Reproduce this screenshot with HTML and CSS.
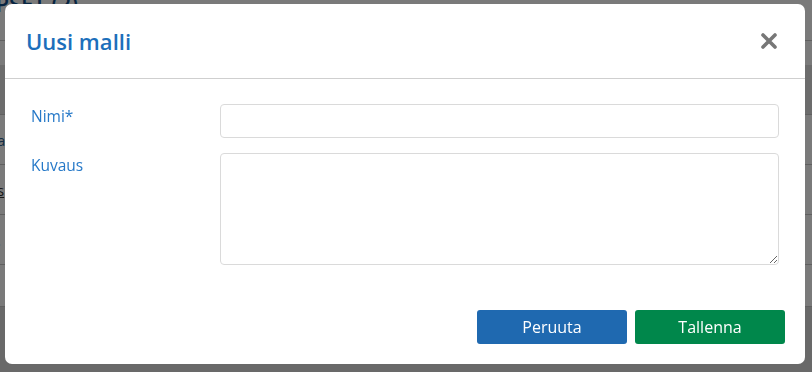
FILE: index.html
```html
<!DOCTYPE html>
<html lang="fi">
<head>
<meta charset="utf-8">
<title>Uusi malli</title>
<link rel="stylesheet" href="styles.css">
</head>
<body>
<div class="page">
  <div class="page-head"><span class="page-title">MALLIPSET (2)</span></div>
  <div class="page-row plain"></div>
  <div class="page-row band"></div>
  <div class="page-row"><span class="cell-text link">a</span></div>
  <div class="page-row"><span class="cell-text under">s</span></div>
  <div class="page-row short"><span class="cell-text">.</span></div>
  <div class="page-row short2"></div>
  <div class="page-foot"></div>
</div>
<div class="overlay"></div>
<div class="modal" role="dialog">
  <div class="modal-header">
    <h2 class="modal-title">Uusi malli</h2>
    <button class="close-btn" aria-label="Sulje">
      <svg width="18" height="18" viewBox="0 0 18 18"><path d="M3 3 L15 15 M15 3 L3 15" stroke="#777" stroke-width="3.6" stroke-linecap="round" fill="none"/></svg>
    </button>
  </div>
  <div class="modal-body">
    <div class="form-row">
      <label class="form-label">Nimi*</label>
      <input class="form-input" type="text">
    </div>
    <div class="form-row">
      <label class="form-label">Kuvaus</label>
      <textarea class="form-textarea"></textarea>
    </div>
  </div>
  <div class="modal-footer">
    <button class="btn btn-cancel">Peruuta</button>
    <button class="btn btn-save">Tallenna</button>
  </div>
</div>
</body>
</html>
```

FILE: styles.css
```css
html, body {
  margin: 0;
  padding: 0;
  width: 812px;
  height: 372px;
  overflow: hidden;
  font-family: "Open Sans", "Noto Sans", sans-serif;
}

.page {
  display: flex;
  flex-direction: column;
  height: 372px;
  background: #ffffff;
}

.page-head {
  height: 40px;
  border-bottom: 1px solid #c8c8c8;
  position: relative;
}

.page-title {
  position: absolute;
  left: -70px;
  top: -12px;
  font-size: 22px;
  font-weight: 600;
  color: #0f4f8a;
}

.page-row {
  height: 49px;
  border-bottom: 1px solid #c8c8c8;
  display: flex;
  align-items: center;
}

.page-row.plain {
  height: 24px;
  border-bottom: none;
}

.page-row.band {
  background: #e2e2e2;
}

.page-row.short {
  height: 49px;
}

.page-row.short2 {
  height: 41px;
}

.page-foot {
  flex: 1;
  background: #dcdcdc;
}

.cell-text {
  font-size: 15px;
  color: #333;
  margin-left: -3px;
}

.cell-text.link {
  color: #2a5f8f;
}

.cell-text.under {
  text-decoration: underline;
}

.overlay {
  position: fixed;
  inset: 0;
  background: rgba(0, 0, 0, 0.52);
}

.modal {
  position: fixed;
  left: 5px;
  top: 4px;
  width: 800px;
  height: 360px;
  box-sizing: border-box;
  background: #ffffff;
  border-radius: 7px;
  display: flex;
  flex-direction: column;
}

.modal-header {
  height: 75px;
  box-sizing: border-box;
  padding: 0 27px 0 21px;
  border-bottom: 1px solid #cfcfcf;
  display: flex;
  align-items: center;
  justify-content: space-between;
}

.modal-title {
  margin: 0;
  font-size: 22px;
  font-weight: 600;
  color: #1c6fbb;
  line-height: 30px;
}

.close-btn {
  border: none;
  background: none;
  padding: 0;
  width: 18px;
  height: 18px;
  display: flex;
  cursor: pointer;
}

.modal-body {
  padding: 25px 26px 0 26px;
  display: flex;
  flex-direction: column;
  gap: 15px;
}

.form-row {
  display: grid;
  grid-template-columns: 189px 1fr;
  align-items: start;
}

.form-label {
  font-size: 15.5px;
  line-height: 21px;
  color: #2679c8;
  padding-top: 2px;
}

.form-input,
.form-textarea {
  box-sizing: border-box;
  width: 100%;
  border: 1px solid #dadada;
  border-radius: 4px;
  background: #fff;
  font-family: inherit;
  font-size: 15px;
  margin: 0;
  padding: 6px 10px;
}

.form-input {
  height: 34px;
}

.form-textarea {
  height: 112px;
  resize: vertical;
  display: block;
}

.modal-footer {
  margin-top: auto;
  padding: 0 20px 20px 0;
  display: flex;
  justify-content: flex-end;
  gap: 8px;
}

.btn {
  width: 150px;
  height: 34px;
  border: none;
  border-radius: 3px;
  color: #ffffff;
  font-family: inherit;
  font-size: 16px;
  cursor: pointer;
}

.btn-cancel {
  background: #1f69b0;
}

.btn-save {
  background: #00874b;
}
```
